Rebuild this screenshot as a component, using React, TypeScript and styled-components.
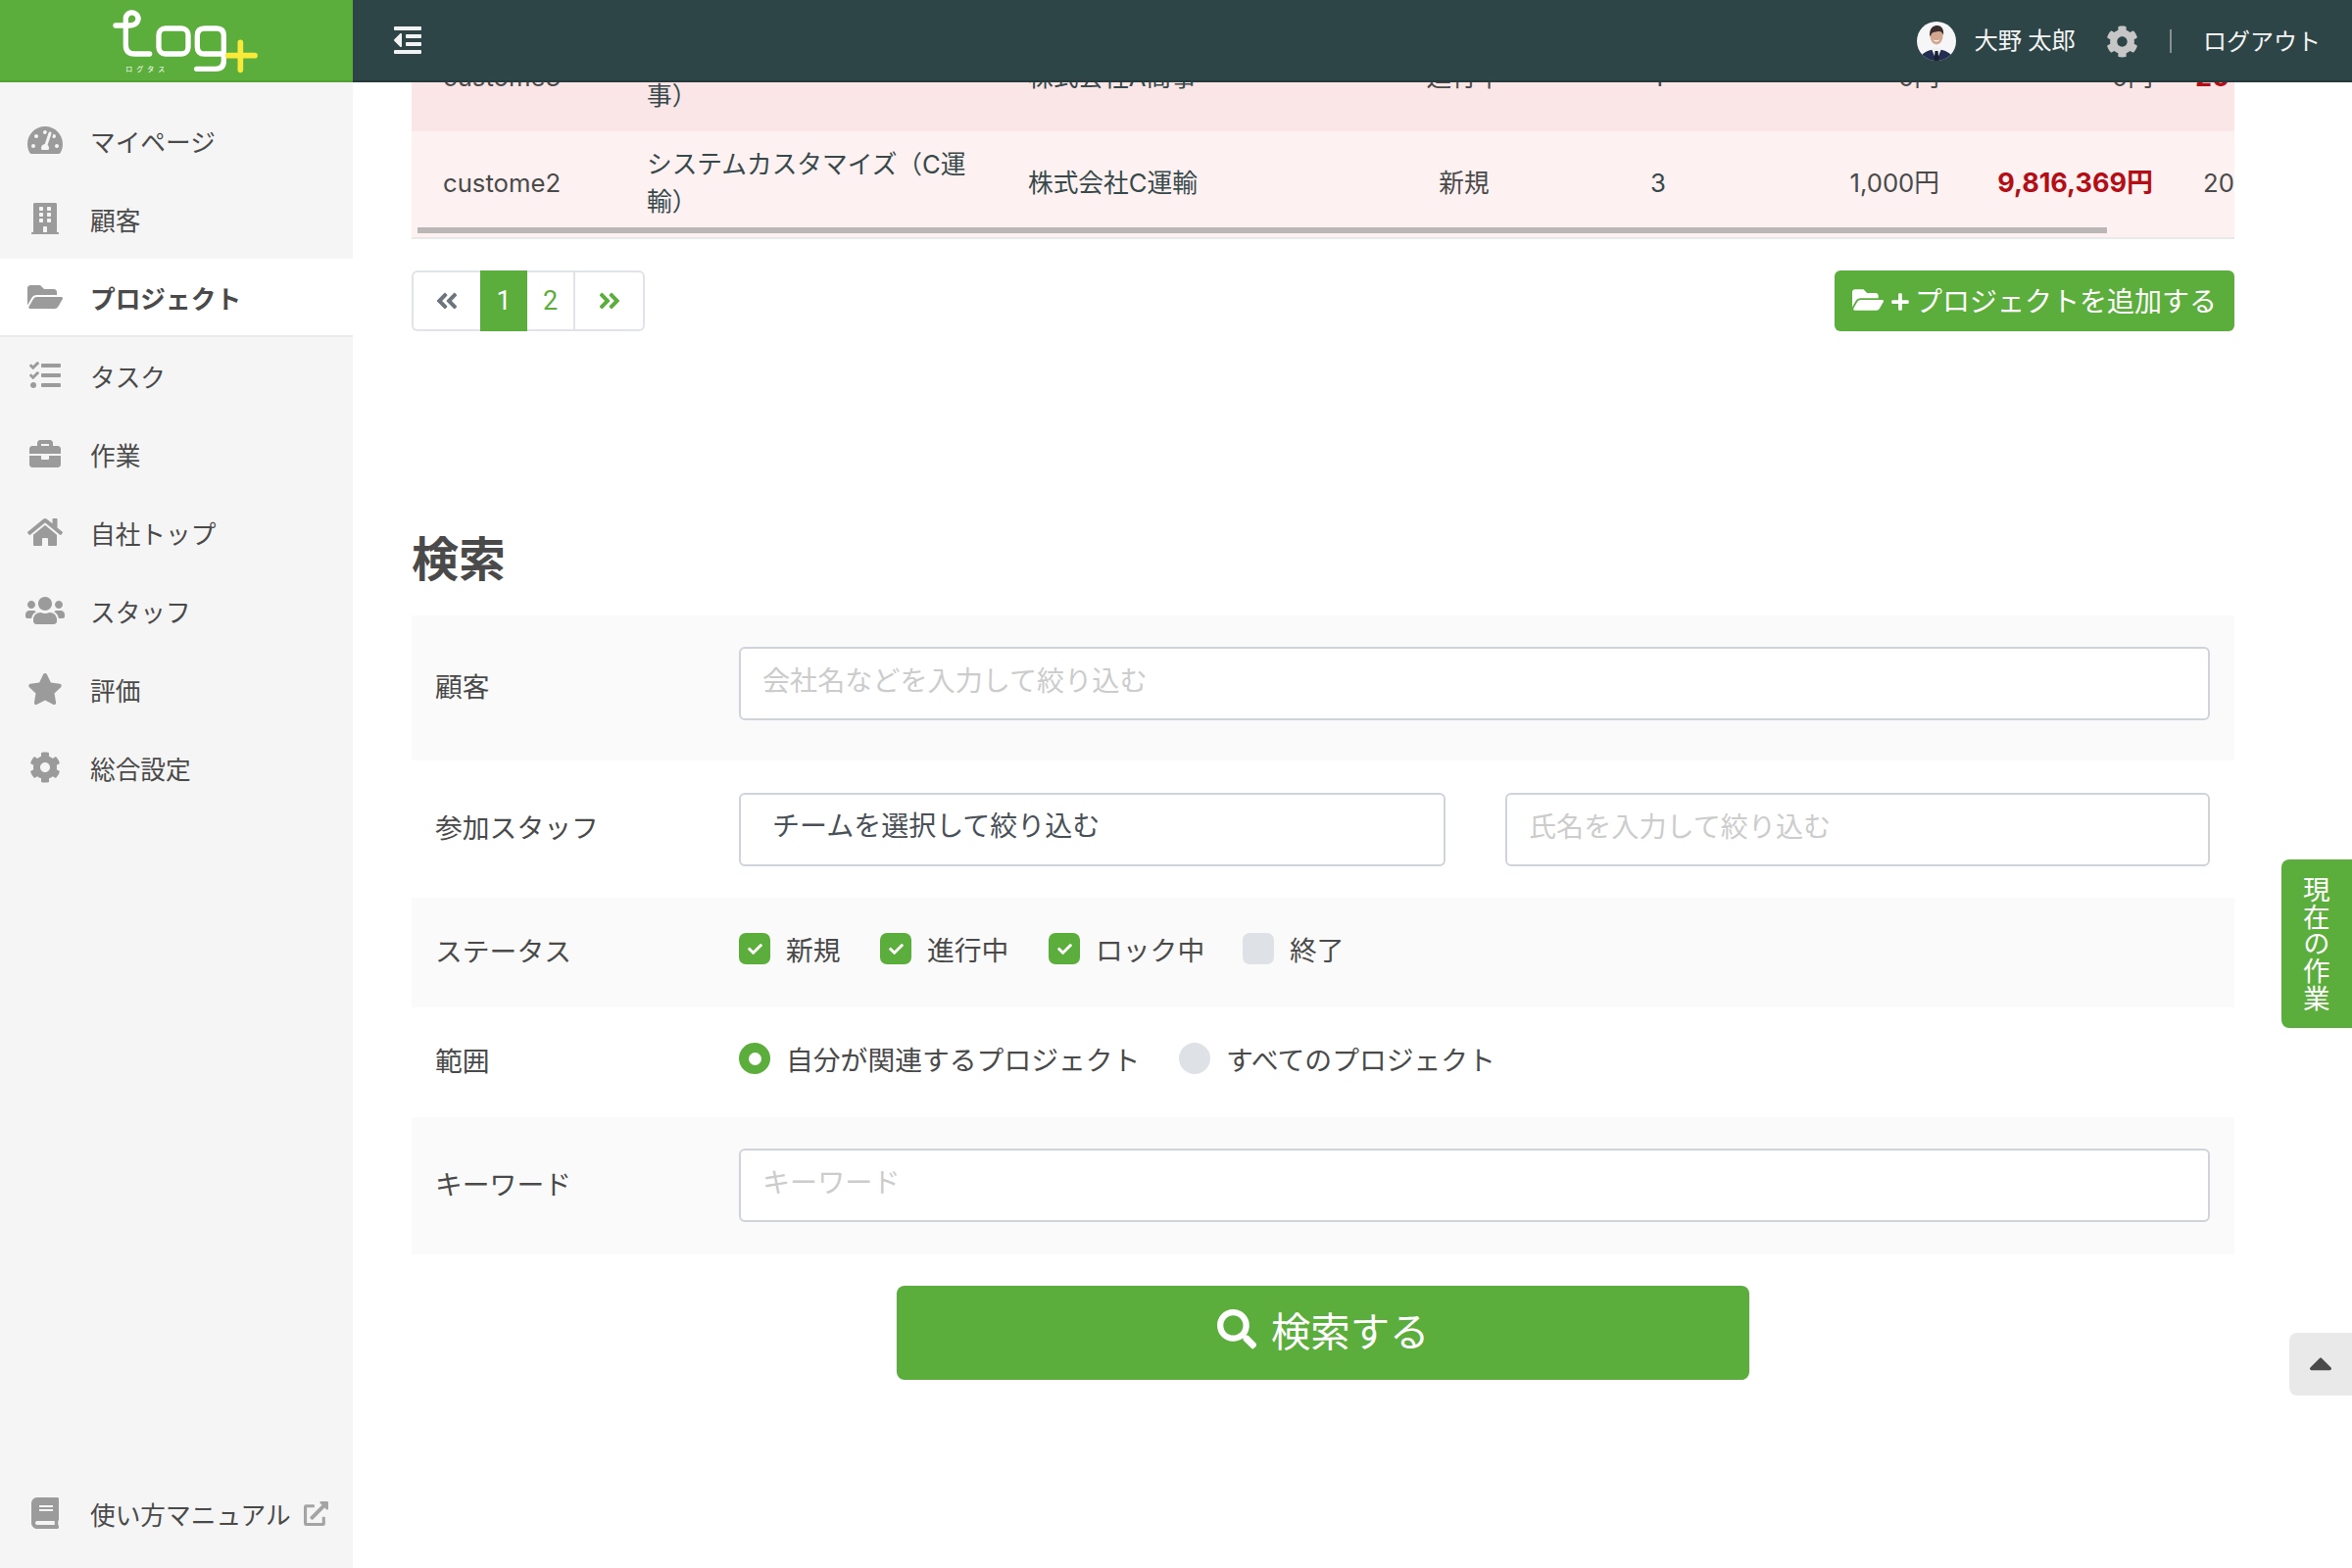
import React from "react";
import styled, { createGlobalStyle } from "styled-components";
import {
  FaOutdent, FaCog, FaTachometerAlt, FaBuilding, FaFolderOpen, FaTasks, FaBriefcase, FaHome, FaUsers,
  FaStar, FaBook, FaExternalLinkAlt, FaAngleDoubleLeft, FaAngleDoubleRight, FaPlus, FaSearch, FaCheck, FaCaretUp,
} from "react-icons/fa";

const Global = createGlobalStyle`
  html, body { margin: 0; padding: 0; height: 100%; overflow: hidden; background: #fff; }
  * { box-sizing: border-box; }
  body { font-family: Roboto, "Noto Sans CJK JP", sans-serif; color: #4a4a4a; }
`;

const green = "#5cae3c";

const Page = styled.div`
  display: flex;
  width: 2400px;
  height: 1600px;
  overflow: hidden;
`;

const Header = styled.header`
  position: fixed;
  top: 0;
  left: 0;
  width: 2400px;
  height: 84px;
  display: flex;
  z-index: 5;
  background: #2d4547;
  border-bottom: 2px solid #263a3c;
`;

const Brand = styled.div`
  width: 360px;
  height: 84px;
  padding-left: 100px;
  background: ${green};
  border-bottom: 2px solid #549f37;
  flex: none;
`;

const Toggle = styled.button`
  margin-left: 40px;
  padding: 0;
  border: 0;
  background: none;
  color: #f2f2f2;
  display: flex;
  align-items: center;
  font-size: 32px;
  height: 82px;
`;

const HeaderRight = styled.div`
  margin-left: auto;
  display: flex;
  align-items: center;
  height: 84px;
  padding-right: 32px;
  color: #f4f4f4;
  font-size: 24.4px;
`;

const UserName = styled.span`
  margin: 0 0 5px 18px;
  white-space: pre;
`;

const GearBox = styled.span`
  display: flex;
  margin-left: 31px;
  color: #c6c6c6;
  font-size: 33px;
`;

const Divider = styled.span`
  width: 2px;
  height: 24px;
  margin-left: 32px;
  background: #87908f;
`;

const Logout = styled.span`
  margin: 0 0 3px 32px;
  font-size: 24px;
`;

const Sidebar = styled.nav`
  width: 360px;
  height: 1600px;
  flex: none;
  display: flex;
  flex-direction: column;
  padding: 104px 0 15px;
  background: #f5f5f5;
`;

const NavItem = styled.a<{ $active?: boolean; $bottom?: boolean }>`
  height: 80px;
  flex: none;
  display: flex;
  align-items: center;
  font-size: 25.7px;
  color: #4a4a4a;
  font-weight: ${(p) => (p.$active ? 700 : 400)};
  background: ${(p) => (p.$active ? "#fff" : "transparent")};
  border-bottom: 2px solid ${(p) => (p.$active ? "#eaeaea" : "transparent")};
  margin-top: ${(p) => (p.$bottom ? "auto" : "0")};
`;

const NavIcon = styled.span`
  width: 92px;
  flex: none;
  display: flex;
  justify-content: center;
  color: #9b9b9b;
`;

const ExternalIcon = styled.span`
  display: flex;
  margin-left: 13px;
  color: #a4a4a4;
  font-size: 25px;
`;

const Main = styled.main`
  flex: 1;
  min-width: 0;
  padding: 26px 120px 0 60px;
`;

const TableWrap = styled.div`
  position: relative;
  height: 218px;
  overflow: hidden;
  border-bottom: 2px solid #e9e9e9;
`;

const Table = styled.table`
  width: 2100px;
  table-layout: fixed;
  border-collapse: collapse;
  font-family: Inter, "Noto Sans CJK JP", sans-serif;
  font-size: 25.7px;
  line-height: 38.4px;
`;

const Row = styled.tr<{ $tone: string }>`
  height: 108px;
  background: ${(p) => p.$tone};
`;

const Cell = styled.td<{ $align?: string; $dark?: boolean; $red?: boolean; $pad?: string }>`
  padding: ${(p) => p.$pad || "0 32px 2px"};
  text-align: ${(p) => p.$align || "left"};
  color: ${(p) => (p.$red ? "#b30d16" : p.$dark ? "#37494b" : "#4a4a4a")};
  font-weight: ${(p) => (p.$red ? 700 : 400)};
  font-size: ${(p) => (p.$red ? "27px" : "inherit")};
  white-space: ${(p) => (p.$align === "right" || p.$align === "center" ? "nowrap" : "normal")};
  overflow: hidden;
`;

const Scrollbar = styled.div`
  position: absolute;
  left: 6px;
  bottom: 4px;
  width: 1724px;
  height: 6px;
  background: #bcb7b7;
`;

const Toolbar = styled.div`
  display: flex;
  justify-content: space-between;
  margin-top: 32px;
  height: 62px;
`;

const Pager = styled.div`
  display: flex;
`;

const PageItem = styled.span<{ $w: number; $active?: boolean; $first?: boolean; $last?: boolean; $muted?: boolean; $div?: boolean }>`
  width: ${(p) => p.$w}px;
  display: flex;
  align-items: center;
  justify-content: center;
  font-size: ${(p) => (p.$muted !== undefined ? "26px" : "27px")};
  background: ${(p) => (p.$active ? green : "#fff")};
  color: ${(p) => (p.$active ? "#fff" : p.$muted ? "#6c757d" : green)};
  border: 2px solid ${(p) => (p.$active ? green : "#e0e4e8")};
  border-left-width: ${(p) => (p.$first ? "2px" : "0")};
  border-right-width: ${(p) => (p.$last || p.$div ? "2px" : "0")};
  border-radius: ${(p) => (p.$first ? "6px 0 0 6px" : p.$last ? "0 6px 6px 0" : "0")};
`;

const AddButton = styled.button`
  width: 408px;
  padding: 0 0 2px 18px;
  display: flex;
  align-items: center;
  border: 0;
  border-radius: 6px;
  background: ${green};
  color: #fff;
  font-family: inherit;
  font-size: 28px;
`;

const AddPlus = styled.span`
  display: flex;
  margin: 4px 5px 0 7px;
  font-size: 20px;
`;

const Title = styled.h2`
  margin: 198px 0 20px;
  font-size: 48px;
  line-height: 72px;
  font-weight: 700;
  color: #4a4a4a;
`;

const FormRow = styled.div<{ $shade?: boolean; $h: number }>`
  display: grid;
  grid-template-columns: 334px 1fr;
  align-items: center;
  height: ${(p) => p.$h}px;
  padding-right: 25px;
  background: ${(p) => (p.$shade ? "#fafafa" : "#fff")};
  font-size: 27.8px;
`;

const Label = styled.div`
  padding: 0 0 6px 24px;
  color: #4a4a4a;
`;

const Field = styled.div<{ $top: number; $bottom: number }>`
  padding: ${(p) => p.$top}px 0 ${(p) => p.$bottom}px;
  display: flex;
  align-items: center;
`;

const TextInput = styled.input<{ $w?: number }>`
  flex: ${(p) => (p.$w ? "none" : "1")};
  width: ${(p) => (p.$w ? `${p.$w}px` : "auto")};
  min-width: 0;
  height: 75px;
  padding: 0 0 4px 22px;
  border: 2px solid #ced4da;
  border-radius: 6px;
  background: #fff;
  font-family: inherit;
  font-size: 28.1px;
  &::placeholder { color: #cccccc; opacity: 1; }
`;

const TeamSelect = styled.select`
  flex: none;
  width: 721px;
  height: 75px;
  padding: 0 0 7px 32px;
  border: 2px solid #ced4da;
  border-radius: 6px;
  background: #fff;
  color: #495057;
  appearance: none;
  font-family: inherit;
  font-size: 28px;
`;

const FieldGap = styled.span`
  width: 61px;
  flex: none;
`;

const Choice = styled.label<{ $w: number }>`
  width: ${(p) => p.$w}px;
  display: flex;
  align-items: center;
  flex: none;
  height: 32px;
  color: #4a4a4a;
  white-space: nowrap;
`;

const Box = styled.span<{ $on?: boolean; $round?: boolean; $gap: number }>`
  position: relative;
  width: 32px;
  height: 32px;
  margin-right: ${(p) => p.$gap}px;
  flex: none;
  display: flex;
  align-items: center;
  justify-content: center;
  border-radius: ${(p) => (p.$round ? "50%" : "7px")};
  background: ${(p) => (p.$on ? green : "#dee2e6")};
  color: #fff;
  font-size: 15px;
  &::after {
    content: "";
    display: ${(p) => (p.$round && p.$on ? "block" : "none")};
    width: 13px;
    height: 13px;
    border-radius: 50%;
    background: #fff;
  }
`;

const SearchRow = styled.div`
  display: flex;
  justify-content: center;
  margin-top: 32px;
`;

const SearchButton = styled.button`
  width: 870px;
  height: 96px;
  padding: 0 0 7px;
  display: flex;
  align-items: center;
  justify-content: center;
  gap: 15px;
  border: 0;
  border-radius: 8px;
  background: ${green};
  color: #fff;
  font-family: inherit;
  font-size: 40.4px;
`;

const SideTab = styled.aside`
  position: fixed;
  right: 0;
  top: 877px;
  width: 72px;
  height: 172px;
  padding-right: 6px;
  display: flex;
  align-items: center;
  justify-content: center;
  border-radius: 8px 0 0 8px;
  background: ${green};
  color: #fff;
  font-size: 27.6px;
  line-height: 27.6px;
  writing-mode: vertical-rl;
  text-orientation: upright;
`;

const TopButton = styled.button`
  position: fixed;
  right: 0;
  top: 1360px;
  width: 64px;
  height: 64px;
  padding: 0 0 2px;
  border: 0;
  display: flex;
  align-items: center;
  justify-content: center;
  border-radius: 8px 0 0 8px;
  background: #e9e9e9;
  color: #4a4a4a;
  font-size: 38px;
`;

const Logo = () => (
  <svg width="180" height="84" viewBox="0 0 540 252" fill="none" strokeLinecap="round" strokeLinejoin="round">
    <g stroke="#fff" strokeWidth="16">
      <path d="M54 78 H98 C120 78 128 60 120 47 C110 34 90 36 85 54 V138 Q85 165 112 165 H158" />
      <rect x="186" y="87" width="90" height="78" rx="20" />
      <path d="M380 165 H326 Q304 165 304 143 V109 Q304 87 326 87 H363 Q385 87 385 109 V186 Q385 211 360 211 H302" />
    </g>
    <path d="M398 170 H480 M436 130 V214" stroke="#f8ea3a" strokeWidth="17" />
    <text x="85" y="219" fill="#fff" fontSize="21" letterSpacing="12" fontFamily="'Noto Sans CJK JP', sans-serif">ログタス</text>
  </svg>
);

const Avatar = () => (
  <svg width="40" height="40" viewBox="0 0 40 40">
    <defs>
      <clipPath id="av"><circle cx="20" cy="20" r="20" /></clipPath>
    </defs>
    <g clipPath="url(#av)">
      <rect width="40" height="40" fill="#f6f6f8" />
      <path d="M2 42 C3 31 12 29 20 28 C28 29 37 31 38 42 Z" fill="#232f52" />
      <path d="M15 28 L20 40 L25 28 L20 26 Z" fill="#f1f1f1" />
      <path d="M18.5 30 H21.5 L22.5 40 H17.5 Z" fill="#1b2030" />
      <ellipse cx="20" cy="15" rx="6.5" ry="8.5" fill="#d3a68f" />
      <path d="M13 14 C13 6 17 4 21 4 C25 4 28 8 27 14 C26 10.5 24 9.5 22 10 C18 11 15 10 14 15 Z" fill="#3a2e2c" />
      <path d="M16.5 18.5 Q20 22.5 23.5 18.5 Q20 20 16.5 18.5 Z" fill="#fff" />
    </g>
  </svg>
);

const navItems = [
  { icon: <FaTachometerAlt size={36} />, label: "マイページ" },
  { icon: <FaBuilding size={32} />, label: "顧客" },
  { icon: <FaFolderOpen size={36} />, label: "プロジェクト", active: true },
  { icon: <FaTasks size={32} />, label: "タスク" },
  { icon: <FaBriefcase size={32} />, label: "作業" },
  { icon: <FaHome size={36} />, label: "自社トップ" },
  { icon: <FaUsers size={40} />, label: "スタッフ" },
  { icon: <FaStar size={36} />, label: "評価" },
  { icon: <FaCog size={32} />, label: "総合設定" },
];

const columns = [208, 389, 365, 224, 172, 233, 205, 304];

const statuses = [
  { label: "新規", on: true, w: 144 },
  { label: "進行中", on: true, w: 172 },
  { label: "ロック中", on: true, w: 198 },
  { label: "終了", on: false, w: 100 },
];

export default function App() {
  return (
    <Page>
      <Global />
      <Header>
        <Brand><Logo /></Brand>
        <Toggle aria-label="menu"><FaOutdent /></Toggle>
        <HeaderRight>
          <Avatar />
          <UserName>大野 太郎</UserName>
          <GearBox><FaCog /></GearBox>
          <Divider />
          <Logout>ログアウト</Logout>
        </HeaderRight>
      </Header>

      <Sidebar>
        {navItems.map((n) => (
          <NavItem key={n.label} $active={n.active}>
            <NavIcon>{n.icon}</NavIcon>
            {n.label}
          </NavItem>
        ))}
        <NavItem $bottom>
          <NavIcon><FaBook size={32} /></NavIcon>
          使い方マニュアル
          <ExternalIcon><FaExternalLinkAlt /></ExternalIcon>
        </NavItem>
      </Sidebar>

      <Main>
        <TableWrap>
          <Table>
            <colgroup>
              {columns.map((w, i) => <col key={i} width={w} />)}
            </colgroup>
            <tbody>
              <Row $tone="#fae6e6">
                <Cell>custome3</Cell>
                <Cell $dark $pad="0 16px 2px 32px">システムカスタマイズ（A商事）</Cell>
                <Cell $dark>株式会社A商事</Cell>
                <Cell $align="center">進行中</Cell>
                <Cell $align="center" $dark>1</Cell>
                <Cell $align="right">0円</Cell>
                <Cell $align="right" $pad="0 19px 2px 0">0円</Cell>
                <Cell $red $pad="0 0 2px 24px">2019/10/31</Cell>
              </Row>
              <Row $tone="#fdf1f1">
                <Cell>custome2</Cell>
                <Cell $dark $pad="0 16px 2px 32px">システムカスタマイズ（C運輸）</Cell>
                <Cell $dark>株式会社C運輸</Cell>
                <Cell $align="center">新規</Cell>
                <Cell $align="center" $dark>3</Cell>
                <Cell $align="right">1,000円</Cell>
                <Cell $align="right" $red $pad="0 19px 2px 0">9,816,369円</Cell>
                <Cell $pad="0 0 2px 32px">2019/10/31</Cell>
              </Row>
            </tbody>
          </Table>
          <Scrollbar />
        </TableWrap>

        <Toolbar>
          <Pager>
            <PageItem $w={70} $first $muted><FaAngleDoubleLeft /></PageItem>
            <PageItem $w={48} $active>1</PageItem>
            <PageItem $w={49} $div>2</PageItem>
            <PageItem $w={71} $last $muted={false}><FaAngleDoubleRight /></PageItem>
          </Pager>
          <AddButton>
            <FaFolderOpen size={32} />
            <AddPlus><FaPlus /></AddPlus>
            プロジェクトを追加する
          </AddButton>
        </Toolbar>

        <Title>検索</Title>

        <FormRow $shade $h={148}>
          <Label>顧客</Label>
          <Field $top={32} $bottom={41}>
            <TextInput placeholder="会社名などを入力して絞り込む" readOnly />
          </Field>
        </FormRow>
        <FormRow $h={140}>
          <Label>参加スタッフ</Label>
          <Field $top={33} $bottom={32}>
            <TeamSelect defaultValue="">
              <option value="">チームを選択して絞り込む</option>
            </TeamSelect>
            <FieldGap />
            <TextInput $w={719} placeholder="氏名を入力して絞り込む" readOnly />
          </Field>
        </FormRow>
        <FormRow $shade $h={112}>
          <Label>ステータス</Label>
          <Field $top={36} $bottom={44}>
            {statuses.map((s) => (
              <Choice key={s.label} $w={s.w}>
                <Box $on={s.on} $gap={16}>{s.on && <FaCheck />}</Box>
                {s.label}
              </Choice>
            ))}
          </Field>
        </FormRow>
        <FormRow $h={112}>
          <Label>範囲</Label>
          <Field $top={36} $bottom={44}>
            <Choice $w={449}>
              <Box $on $round $gap={16} />
              自分が関連するプロジェクト
            </Choice>
            <Choice $w={320}>
              <Box $round $gap={16} />
              すべてのプロジェクト
            </Choice>
          </Field>
        </FormRow>
        <FormRow $shade $h={140}>
          <Label>キーワード</Label>
          <Field $top={32} $bottom={33}>
            <TextInput placeholder="キーワード" readOnly />
          </Field>
        </FormRow>

        <SearchRow>
          <SearchButton><FaSearch />検索する</SearchButton>
        </SearchRow>
      </Main>

      <SideTab>現在の作業</SideTab>
      <TopButton aria-label="top"><FaCaretUp /></TopButton>
    </Page>
  );
}
